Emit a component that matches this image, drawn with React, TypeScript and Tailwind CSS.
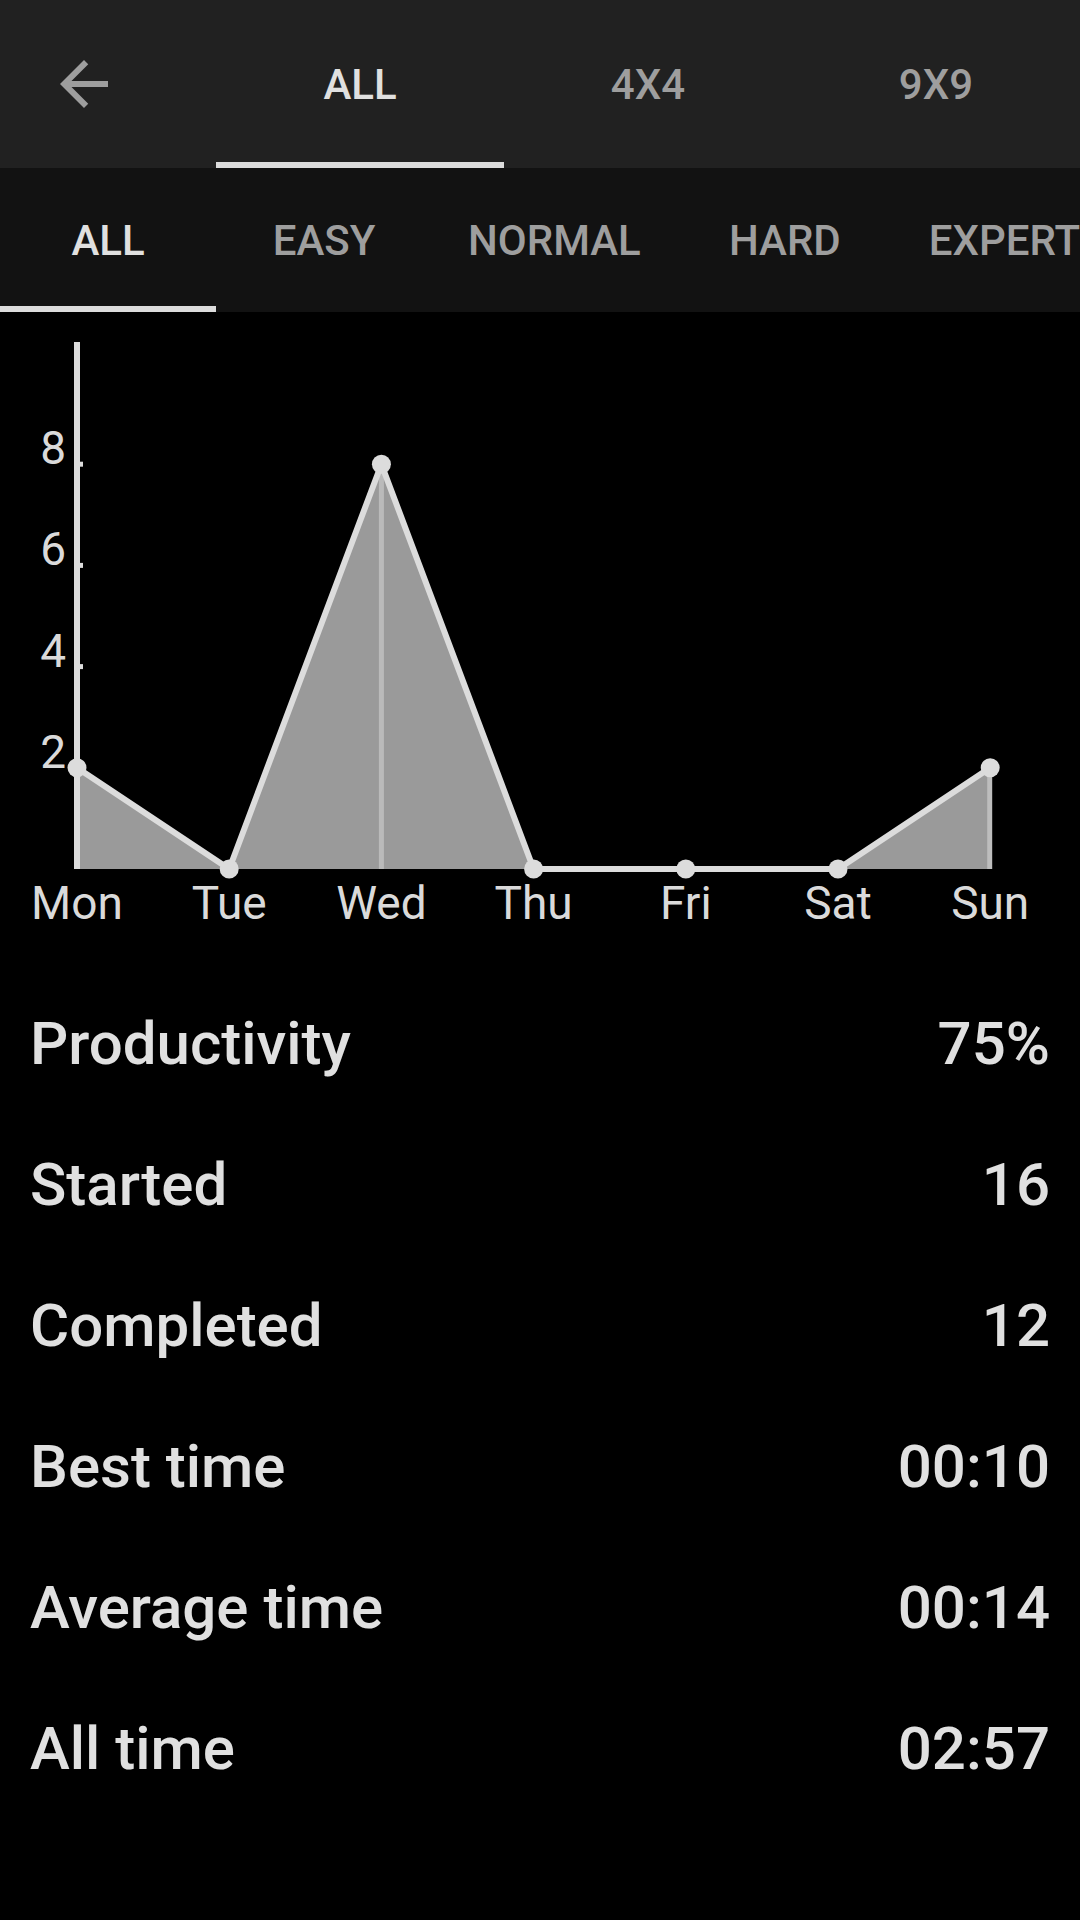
import React from 'react';

const topTabs = ['ALL', '4X4', '9X9'];
const levelTabs = ['ALL', 'EASY', 'NORMAL', 'HARD', 'EXPERT'];

const stats = [
  { label: 'Productivity', value: '75%' },
  { label: 'Started', value: '16' },
  { label: 'Completed', value: '12' },
  { label: 'Best time', value: '00:10' },
  { label: 'Average time', value: '00:14' },
  { label: 'All time', value: '02:57' },
];

const days = ['Mon', 'Tue', 'Wed', 'Thu', 'Fri', 'Sat', 'Sun'];
const counts = [2, 0, 8, 0, 0, 0, 2];

// chart geometry, in page pixels
const X0 = 77;
const STEP = 152.2;
const BASE = 869;
const UNIT = 50.6;

const px = (i: number) => X0 + i * STEP;
const py = (v: number) => BASE - v * UNIT;

const WeekChart: React.FC = () => {
  const pts = counts.map((v, i) => `${px(i)},${py(v)}`).join(' ');
  const area = `${px(0)},${BASE} ${pts} ${px(6)},${BASE}`;

  return (
    <svg
      className="block w-full h-[661px]"
      viewBox="0 312 1080 661"
      fill="none"
      style={{ fontFamily: 'Roboto, sans-serif' }}
    >
      <polygon points={area} fill="#9a9a9a" />

      {/* drop lines */}
      <line x1={px(2)} y1={py(8)} x2={px(2)} y2={BASE} stroke="#bababa" strokeWidth={5} />
      <line x1={px(6) - 0.5} y1={py(2)} x2={px(6) - 0.5} y2={BASE} stroke="#bdbdbd" strokeWidth={5} />

      {/* y axis */}
      <line x1={X0} y1={342} x2={X0} y2={BASE} stroke="#dcdcdc" strokeWidth={6} />
      {[2, 4, 6, 8].map((v) => (
        <g key={v}>
          <rect x={X0} y={py(v) - 2.5} width={6} height={5} fill="#dcdcdc" />
          <text x={66} y={py(v)} textAnchor="end" fontSize={46} fill="#dadada">
            {v}
          </text>
        </g>
      ))}

      <polyline points={pts} stroke="#dcdcdc" strokeWidth={6} strokeLinejoin="round" />
      {counts.map((v, i) => (
        <circle key={i} cx={px(i)} cy={py(v)} r={9.5} fill="#dcdcdc" />
      ))}

      {days.map((d, i) => (
        <text key={d} x={px(i)} y={919} textAnchor="middle" fontSize={46} fill="#dadada">
          {d}
        </text>
      ))}
    </svg>
  );
};

const App: React.FC = () => {
  return (
    <div className="min-h-[1920px] w-[1080px] bg-black font-[Roboto,sans-serif] overflow-hidden">
      {/* mode tabs */}
      <div className="flex h-[168px] bg-[#212121]">
        <div className="w-[216px] flex items-center pl-[48px]">
          <svg width="72" height="72" viewBox="0 0 24 24" fill="#9e9e9e">
            <path d="M20 11H7.83l5.59-5.59L12 4l-8 8 8 8 1.41-1.41L7.83 13H20v-2z" />
          </svg>
        </div>
        {topTabs.map((t, i) => (
          <div key={t} className="relative w-[288px] flex items-center justify-center">
            <span
              className={`text-[42px] font-medium ${i === 0 ? 'text-[#e0e0e0]' : 'text-[#9e9e9e]'}`}
            >
              {t}
            </span>
            {i === 0 && <div className="absolute bottom-0 left-0 right-0 h-[6px] bg-[#dcdcdc]" />}
          </div>
        ))}
      </div>

      {/* difficulty tabs */}
      <div className="flex h-[144px] bg-[#121212] overflow-hidden">
        {levelTabs.map((t, i) => (
          <div
            key={t}
            className="relative shrink-0 min-w-[216px] px-[36px] flex items-center justify-center"
          >
            <span
              className={`text-[42px] font-medium whitespace-nowrap ${i === 0 ? 'text-[#e0e0e0]' : 'text-[#9e9e9e]'}`}
            >
              {t}
            </span>
            {i === 0 && <div className="absolute bottom-0 left-0 right-0 h-[6px] bg-[#dcdcdc]" />}
          </div>
        ))}
      </div>

      <WeekChart />

      {/* stats */}
      <div className="flex flex-col">
        {stats.map((s) => (
          <div
            key={s.label}
            className="h-[141px] flex items-center justify-between px-[30px] text-[60px] font-medium text-[#e0e0e0]"
          >
            <span>{s.label}</span>
            <span>{s.value}</span>
          </div>
        ))}
      </div>
    </div>
  );
};

export default App;
